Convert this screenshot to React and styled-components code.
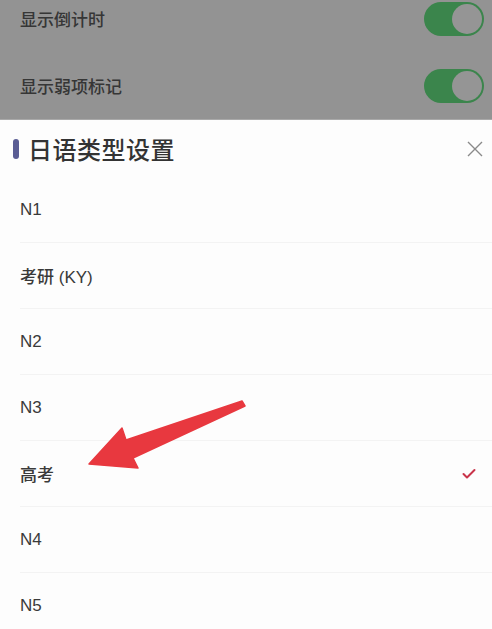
import React from 'react';
import styled, { createGlobalStyle } from 'styled-components';

const GlobalStyle = createGlobalStyle`
  html, body {
    margin: 0;
    padding: 0;
    background: #fdfdfd;
  }
  body {
    font-family: "Liberation Sans", "Noto Sans CJK SC", sans-serif;
  }
`;

const Page = styled.div`
  width: 492px;
  height: 629px;
  overflow: hidden;
  position: relative;
  background: #fdfdfd;
`;

const Dimmed = styled.div`
  height: 120px;
  background: #939393;
  display: flex;
  flex-direction: column;
  justify-content: flex-end;
  overflow: hidden;
  border-bottom: 1px solid #a9a9a9;
  box-sizing: border-box;
`;

const SettingRow = styled.div`
  flex: 0 0 67px;
  display: flex;
  align-items: center;
  justify-content: space-between;
  padding: 0 8px 0 20px;
  font-size: 17px;
  font-weight: 500;
  color: #363636;
`;

const Toggle = styled.div`
  width: 60px;
  height: 34px;
  border-radius: 17px;
  background: #3b854c;
  display: flex;
  align-items: center;
  justify-content: flex-end;
  padding: 2px;
  box-sizing: border-box;
`;

const Knob = styled.div`
  width: 30px;
  height: 30px;
  border-radius: 50%;
  background: #959595;
`;

const Sheet = styled.div`
  background: #fdfdfd;
`;

const Header = styled.div`
  height: 57px;
  display: flex;
  align-items: center;
  justify-content: space-between;
  padding: 0 8px 0 13px;
`;

const TitleWrap = styled.div`
  display: flex;
  align-items: center;
  gap: 9px;
`;

const TitleBar = styled.span`
  width: 6px;
  height: 20px;
  border-radius: 3px;
  background: #5a5d94;
`;

const Title = styled.h2`
  margin: 0;
  font-size: 24px;
  font-weight: 500;
  color: #333;
  font-family: "Noto Sans CJK SC", sans-serif;
  letter-spacing: 0.5px;
`;

const Option = styled.div`
  height: 66px;
  display: flex;
  align-items: center;
  justify-content: space-between;
  margin-left: 20px;
  padding-right: 16px;
  font-size: 17px;
  font-weight: 500;
  color: #3a3a3a;
  border-bottom: ${p => (p.last ? 'none' : '1px solid #f3f3f3')};
  box-sizing: border-box;
`;

const Arrow = styled.svg`
  position: absolute;
  left: 0;
  top: 0;
  pointer-events: none;
`;

const options = ['N1', '考研 (KY)', 'N2', 'N3', '高考', 'N4', 'N5'];

export default function App() {
  return (
    <Page>
      <GlobalStyle />
      <Dimmed>
        <SettingRow>
          显示倒计时
          <Toggle><Knob /></Toggle>
        </SettingRow>
        <SettingRow>
          显示弱项标记
          <Toggle><Knob /></Toggle>
        </SettingRow>
      </Dimmed>
      <Sheet>
        <Header>
          <TitleWrap>
            <TitleBar />
            <Title>日语类型设置</Title>
          </TitleWrap>
          <svg width="18" height="18" viewBox="0 0 18 18">
            <path d="M2 2 L16 16 M16 2 L2 16" stroke="#8a8a8a" strokeWidth="1.4" fill="none" />
          </svg>
        </Header>
        {options.map((o, i) => (
          <Option key={o} last={i === options.length - 1}>
            {o}
            {o === '高考' && (
              <svg width="14" height="12" viewBox="0 0 14 12">
                <path d="M1.5 6 L5 9.5 L12.5 2" stroke="#c9344a" strokeWidth="2" fill="none" strokeLinecap="round" strokeLinejoin="round" />
              </svg>
            )}
          </Option>
        ))}
      </Sheet>
      <Arrow width="492" height="629" viewBox="0 0 492 629">
        <polygon
          points="89,464 122,428 126,440 242,401 245,406 133,458 138,468"
          fill="#e8383f"
          stroke="#e8383f"
          strokeWidth="1.5"
          strokeLinejoin="round"
        />
      </Arrow>
    </Page>
  );
}
